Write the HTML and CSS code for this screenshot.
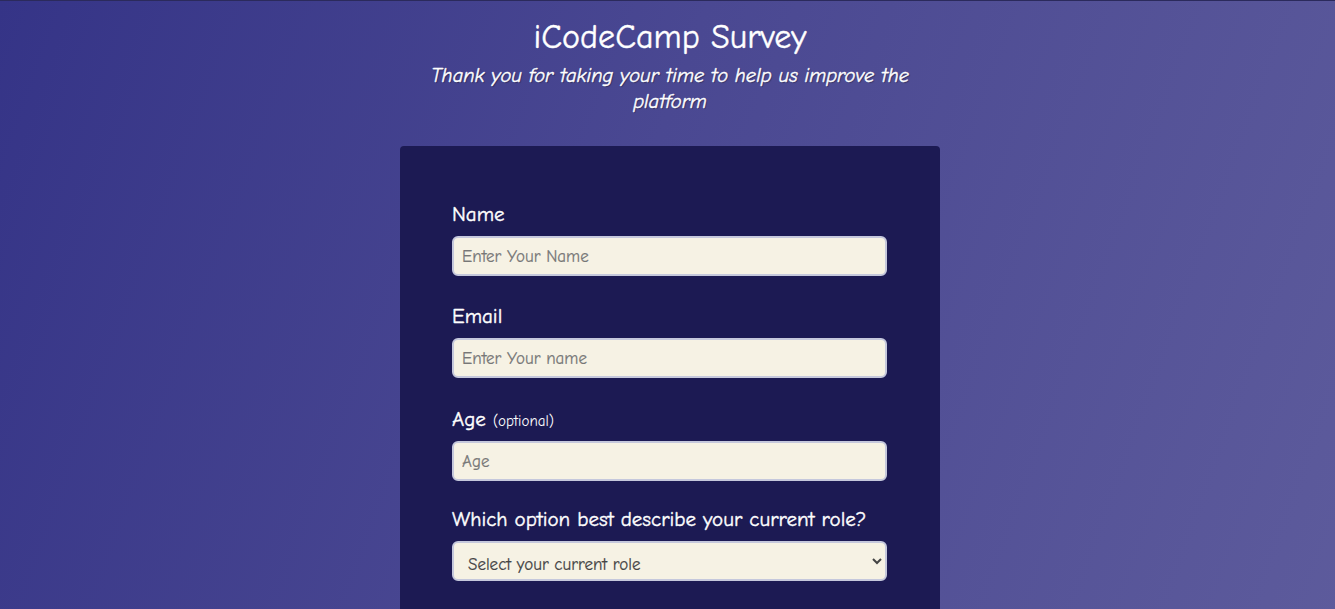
FILE: index.html
```html
<!DOCTYPE html>
<html lang="en">
<head>
<meta charset="utf-8">
<title>iCodeCamp Survey</title>
<link rel="stylesheet" href="styles.css">
</head>
<body>
<div class="page">
  <header class="header">
    <h1 class="title">iCodeCamp Survey</h1>
    <p class="description">Thank you for taking your time to help us improve the platform</p>
  </header>
  <form class="card">
    <div class="group">
      <label class="label" for="name">Name</label>
      <input class="field" id="name" type="text" placeholder="Enter Your Name">
    </div>
    <div class="group">
      <label class="label" for="email">Email</label>
      <input class="field" id="email" type="email" placeholder="Enter Your name">
    </div>
    <div class="group">
      <label class="label label-age" for="age">Age <span class="hint">(optional)</span></label>
      <input class="field" id="age" type="number" placeholder="Age">
    </div>
    <div class="group group-role">
      <label class="label" for="role">Which option best describe your current role?</label>
      <select class="field select" id="role">
        <option>Select your current role</option>
      </select>
    </div>
  </form>
</div>
</body>
</html>
```
FILE: styles.css
```css
html, body {
  margin: 0;
  padding: 0;
}
body {
  font-family: "Comic Sans MS", "Comic Neue", cursive;
  color: #ffffff;
  background: linear-gradient(110deg, #353487 0%, #4a4892 45%, #5d5b9c 100%);
  min-height: 100vh;
  border-top: 1px solid #2b2a5c;
}
.page {
  display: flex;
  flex-direction: column;
  align-items: center;
  padding-left: 5px;
}
.header {
  width: 540px;
  text-align: center;
}
.title {
  font-size: 34px;
  font-weight: normal;
  margin: 14px 0 0;
  line-height: 44px;
  -webkit-text-stroke: 0.4px #ffffff;
}
.description {
  font-style: italic;
  font-size: 20.5px;
  line-height: 26px;
  margin: 4px 0 0;
  -webkit-text-stroke: 0.4px #ffffff;
  text-shadow: 1px 1px 1px rgba(0,0,0,0.35);
}
.card {
  width: 540px;
  box-sizing: border-box;
  margin-top: 31px;
  background: #1c1a53;
  border-radius: 4px;
  padding: 54px 53px 80px 52px;
  display: flex;
  flex-direction: column;
  gap: 26px;
}
.group {
  display: flex;
  flex-direction: column;
  gap: 8px;
}
.group-role {
  margin-top: -2px;
}
.label {
  font-size: 21px;
  line-height: 28px;
  height: 28px;
  -webkit-text-stroke: 0.4px #ffffff;
}
.label-age {
  height: 29px;
  line-height: 30px;
}
.hint {
  font-size: 15px;
  line-height: 0;
  -webkit-text-stroke: 0;
}
.field {
  box-sizing: border-box;
  width: 100%;
  height: 40px;
  border: 2px solid #c5c8dc;
  border-radius: 6px;
  background: #f6f2e4;
  font-family: inherit;
  font-size: 17px;
  padding: 0 8px;
  color: #333;
  -webkit-text-stroke: 0.2px #777;
}
.field::placeholder {
  color: #777;
}
.select {
  color: #444;
  padding: 6px 8px 0 10px;
  -webkit-text-stroke: 0.2px #444;
}
```
